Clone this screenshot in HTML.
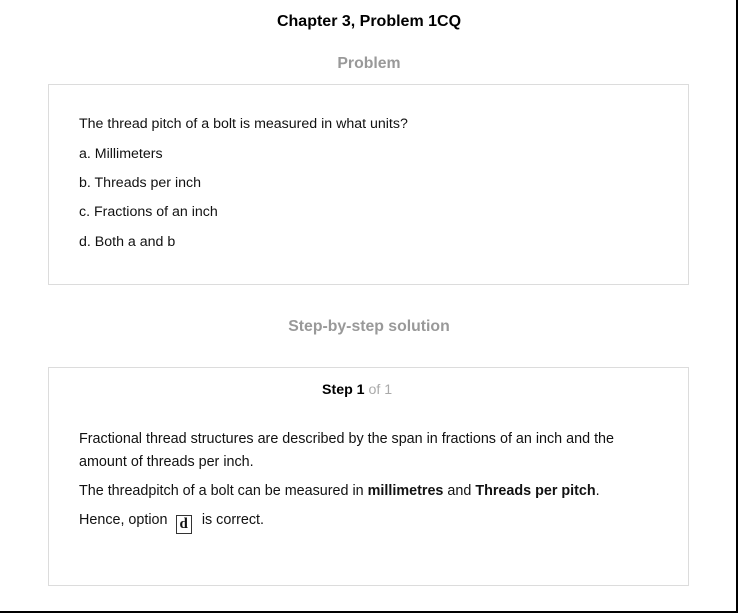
<!DOCTYPE html>
<html><head><meta charset="utf-8"><style>
body{margin:0;width:738px;height:613px;background:#fff;font-family:"Liberation Sans",Arial,sans-serif;position:relative;overflow:hidden;color:#111}
.a{position:absolute;white-space:nowrap;font-size:14.2px;line-height:17px}
.s{font-size:14.35px}
.c{left:0;width:738px;text-align:center}
.box{position:absolute;left:48px;width:639px;border:1px solid #dcdcdc}
</style></head><body>
<div style="position:absolute;right:0;top:0;width:2px;height:613px;background:#000"></div>
<div style="position:absolute;left:0;bottom:0;width:738px;height:2px;background:#000"></div>
<div class="a c" style="top:12px;font-size:16px;font-weight:bold;line-height:19px;color:#000">Chapter 3, Problem 1CQ</div>
<div class="a c" style="top:54px;font-size:15.8px;font-weight:bold;line-height:19px;color:#999">Problem</div>
<div class="box" style="top:84px;height:199px"></div>
<div class="a" style="left:79px;top:116px">The thread pitch of a bolt is measured in what units?</div>
<div class="a" style="left:79px;top:146px">a. Millimeters</div>
<div class="a" style="left:79px;top:175px">b. Threads per inch</div>
<div class="a" style="left:79px;top:204px">c. Fractions of an inch</div>
<div class="a" style="left:79px;top:234px">d. Both a and b</div>
<div class="a c" style="top:317px;font-size:15.8px;font-weight:bold;line-height:19px;color:#999">Step-by-step solution</div>
<div class="box" style="top:367px;height:217px"></div>
<div class="a" style="left:322px;top:382px"><b style="color:#000">Step 1</b> <span style="color:#aaa">of 1</span></div>
<div class="a s" style="left:79px;top:431px">Fractional thread structures are described by the span in fractions of an inch and the</div>
<div class="a s" style="left:79px;top:454px">amount of threads per inch.</div>
<div class="a s" style="left:79px;top:483px">The threadpitch of a bolt can be measured in <b>millimetres</b> and <b>Threads per pitch</b>.</div>
<div class="a s" style="left:79px;top:512px">Hence, option <span style="display:inline-block;border:1px solid #333;padding:0 3px;margin:0 6px 0 4px;font-family:'Liberation Serif',serif;font-weight:bold;font-size:15px;line-height:17px;vertical-align:-4px">d</span> is correct.</div>
</body></html>
